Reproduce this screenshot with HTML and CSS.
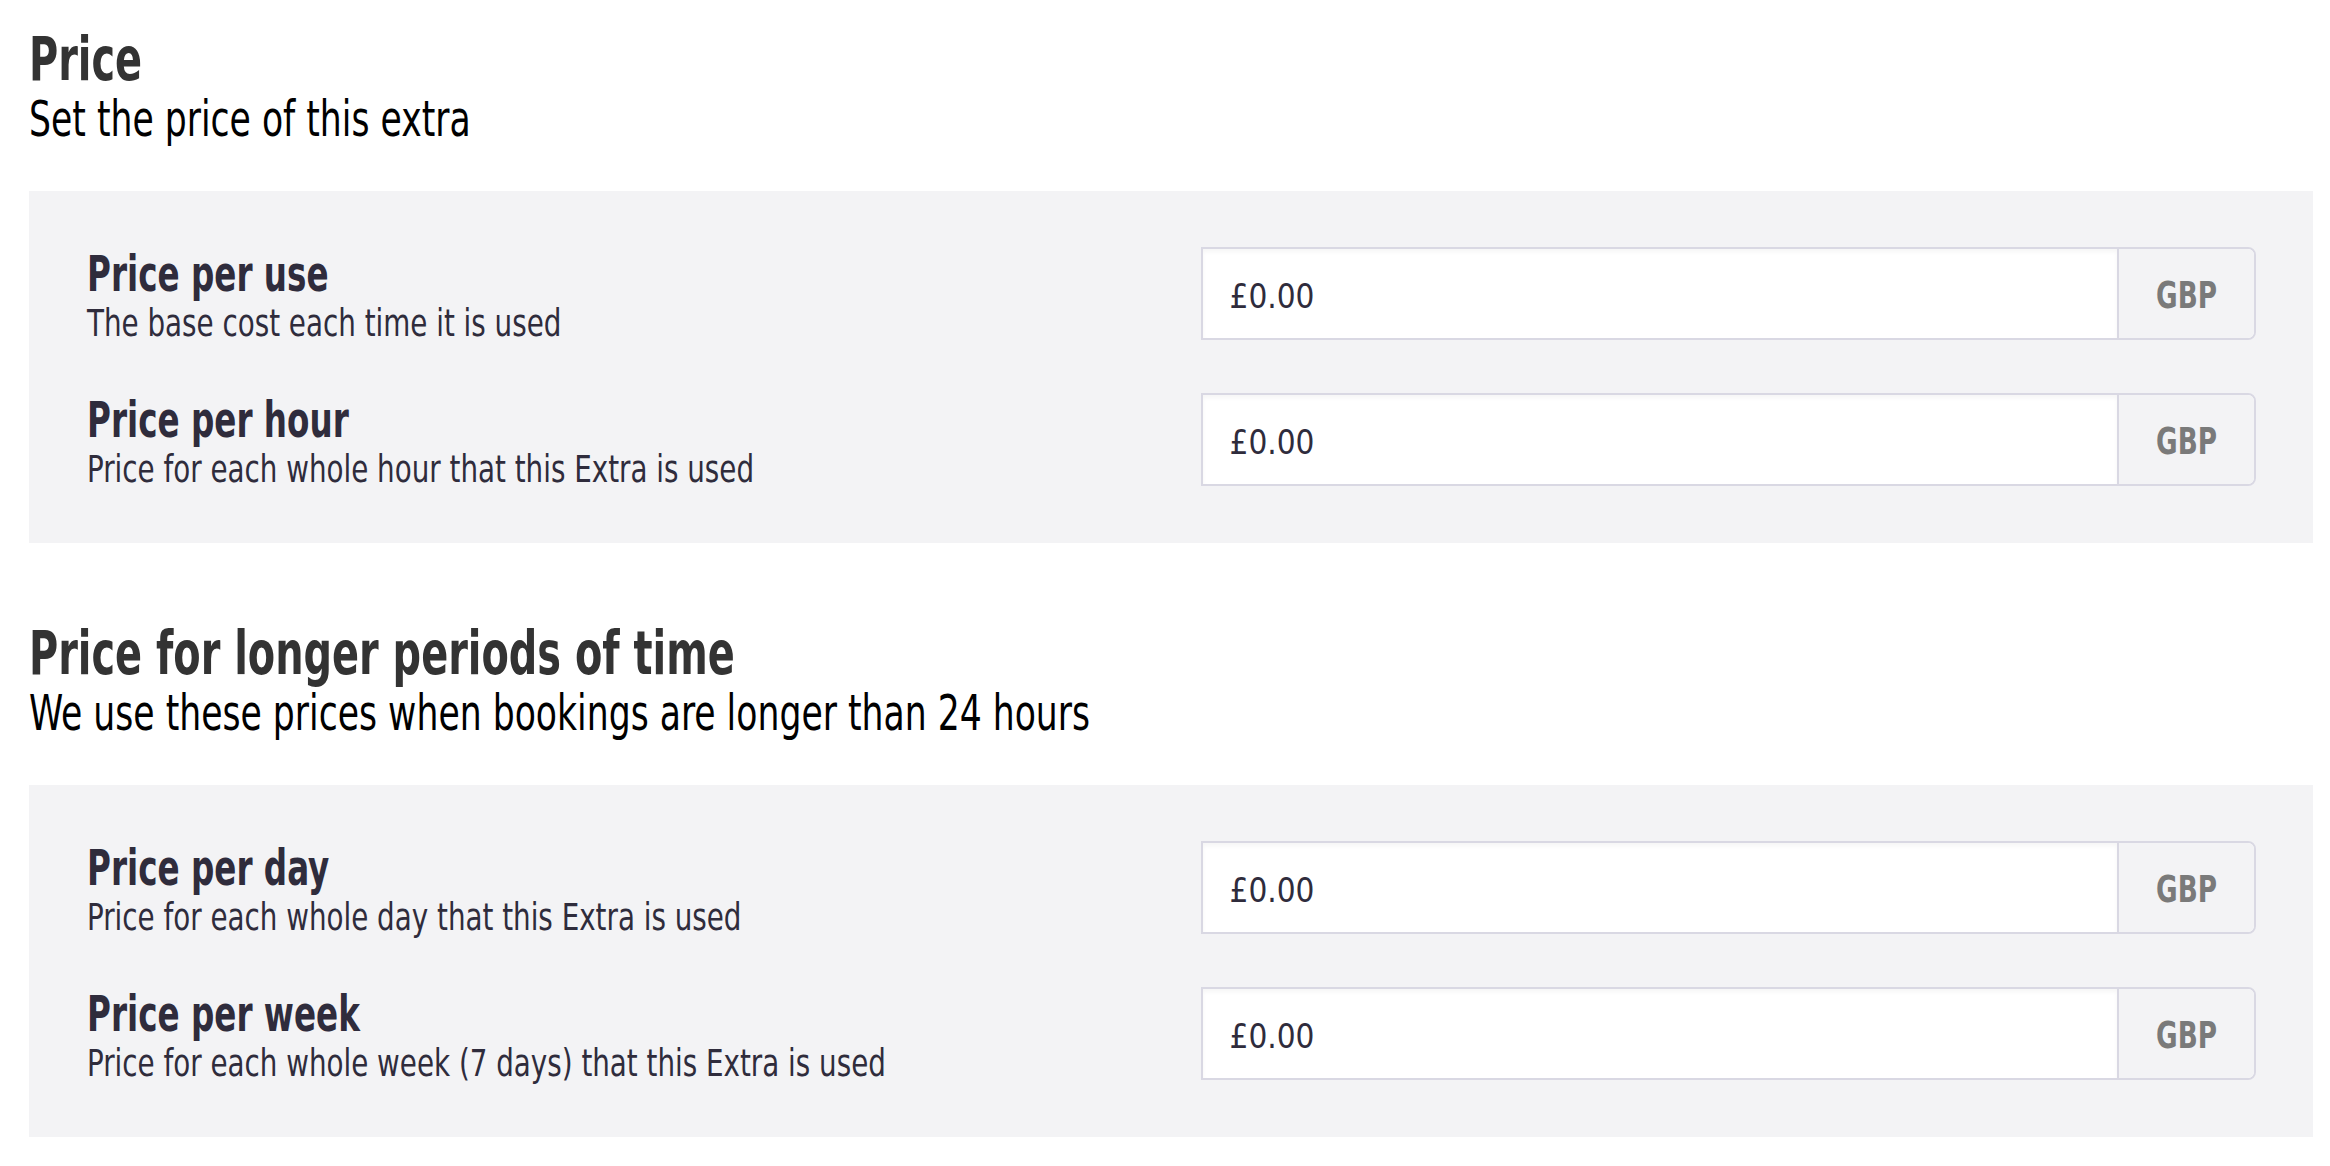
FILE: index.html
```html
<!DOCTYPE html>
<html lang="en">
  <head>
    <meta charset="UTF-8" />
    <meta name="viewport" content="width=device-width, initial-scale=1.0" />
    <title>Extra price</title>
    <link rel="stylesheet" href="styles.css">
  </head>
  <body>
    <div class="page">
      <!-- 기본 가격 -->
      <section class="section">
        <h1 class="section-title">Price</h1>
        <p class="section-sub">Set the price of this extra</p>
        <div class="panel">
          <div class="row">
            <div class="label">
              <div class="label-title">Price per use</div>
              <div class="label-desc">The base cost each time it is used</div>
            </div>
            <div class="money">
              <input class="money-input" type="text" value="£0.00" />
              <span class="money-unit"><span class="money-code">GBP</span></span>
            </div>
          </div>
          <div class="row">
            <div class="label">
              <div class="label-title">Price per hour</div>
              <div class="label-desc">Price for each whole hour that this Extra is used</div>
            </div>
            <div class="money">
              <input class="money-input" type="text" value="£0.00" />
              <span class="money-unit"><span class="money-code">GBP</span></span>
            </div>
          </div>
        </div>
      </section>

      <!-- 장기 가격 -->
      <section class="section">
        <h1 class="section-title">Price for longer periods of time</h1>
        <p class="section-sub">We use these prices when bookings are longer than 24 hours</p>
        <div class="panel">
          <div class="row">
            <div class="label">
              <div class="label-title">Price per day</div>
              <div class="label-desc">Price for each whole day that this Extra is used</div>
            </div>
            <div class="money">
              <input class="money-input" type="text" value="£0.00" />
              <span class="money-unit"><span class="money-code">GBP</span></span>
            </div>
          </div>
          <div class="row">
            <div class="label">
              <div class="label-title">Price per week</div>
              <div class="label-desc">Price for each whole week (7 days) that this Extra is used</div>
            </div>
            <div class="money">
              <input class="money-input" type="text" value="£0.00" />
              <span class="money-unit"><span class="money-code">GBP</span></span>
            </div>
          </div>
        </div>
      </section>
    </div>
  </body>
</html>
```

FILE: styles.css
```css
body {
  margin: 0;
  background: white;
  font-family: "DejaVu Sans Condensed", "DejaVu Sans", sans-serif;
  font-stretch: condensed;
  color: #2f2c3c;
}

.page {
  padding: 27px 17px 0 29px;
}

.section + .section {
  margin-top: 78px;
}

/* 좁은 글꼴이 없어서 가로로 눌러줌 */
.section-title,
.section-sub,
.label-title,
.label-desc {
  transform-origin: left center;
  white-space: nowrap;
}

.section-title {
  margin: 0;
  font-size: 60px;
  line-height: 64px;
  font-weight: bold;
  color: #333;
  transform: scaleX(0.738);
}

.section-sub {
  margin: 0 0 43px;
  font-size: 50px;
  line-height: 57px;
  color: #000;
  transform: scaleX(0.77);
}

.panel {
  background: #f3f3f5;
  padding: 56px 57px 50px 58px;
  display: flex;
  flex-direction: column;
  gap: 46px;
}

.row {
  display: grid;
  grid-template-columns: 1fr 1fr;
  column-gap: 58px;
  align-items: start;
}

.label-title {
  font-size: 50px;
  line-height: 54px;
  font-weight: bold;
  transform: scaleX(0.725);
}

.label-desc {
  font-size: 37px;
  line-height: 46px;
  transform: scaleX(0.834);
}

.money {
  display: flex;
  height: 93px;
  box-sizing: border-box;
  border: 2px solid #d9d8e3;
  border-radius: 0 8px 8px 0;
  background: white;
}

.money-input {
  flex: 1;
  min-width: 0;
  border: none;
  outline: none;
  margin: 0;
  padding: 5px 27px 0;
  font-family: inherit;
  font-stretch: inherit;
  font-size: 33px;
  color: #2f2c3c;
  background: white;
  box-shadow: inset 0 3px 4px rgba(0, 0, 0, 0.04);
}

.money-unit {
  width: 137px;
  flex-shrink: 0;
  border-left: 2px solid #d9d8e3;
  border-radius: 0 6px 6px 0;
  background: #f3f3f5;
  display: flex;
  align-items: center;
  justify-content: center;
  padding-top: 2px;
  box-sizing: border-box;
}

.money-code {
  font-size: 38px;
  font-weight: bold;
  color: #7a7a7a;
  transform: scaleX(0.77);
}
```
